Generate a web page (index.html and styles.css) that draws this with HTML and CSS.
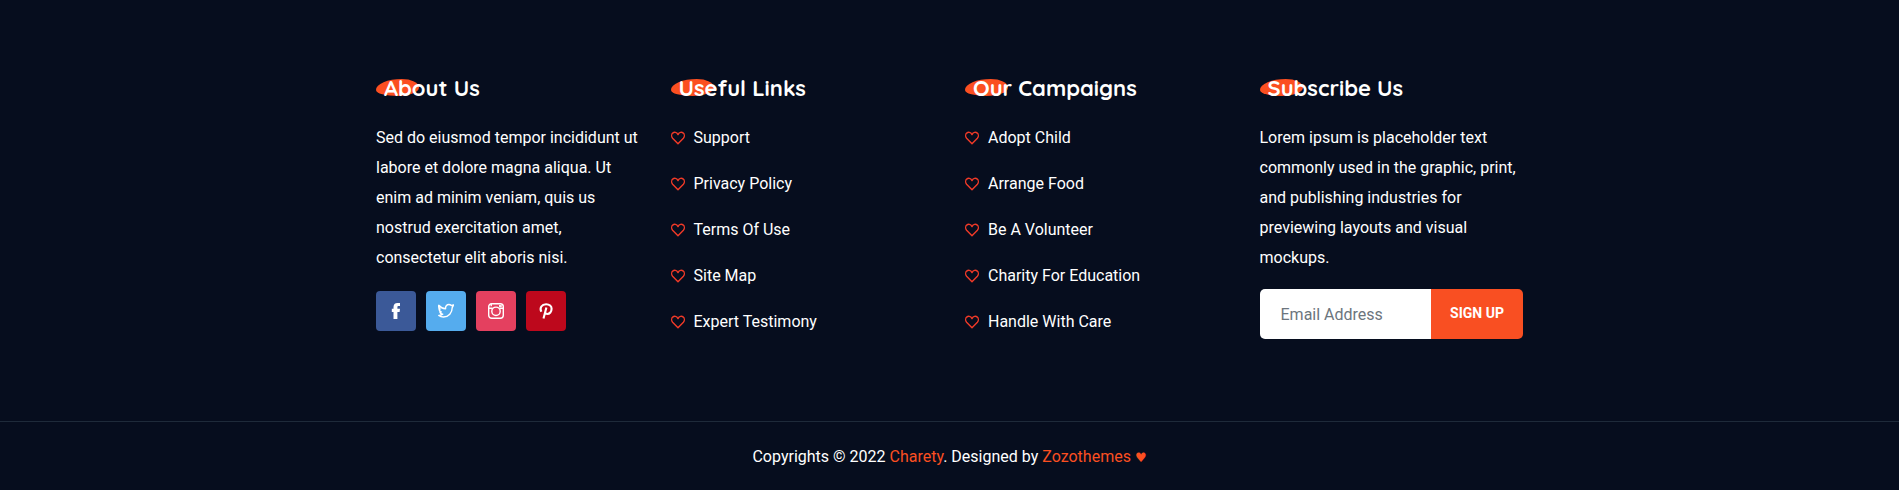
FILE: index.html
```
<!DOCTYPE html>
<html lang="en">
<head>
<meta charset="utf-8">
<meta name="viewport" content="width=device-width, initial-scale=1">
<title>Charety</title>
<link rel="stylesheet" href="styles.css">
</head>
<body>
<svg class="sprite" aria-hidden="true">
  <symbol id="heart" viewBox="0 0 14 14"><path d="M7 12.800 1.600 7.200C.2 5.600.5 3.200 1.700 2.100 3.200.8 5.700.9 7 3.600 8.300.9 10.800.8 12.300 2.100 13.500 3.200 13.800 5.600 12.400 7.200Z" fill="none" stroke="currentColor" stroke-width="1.400" stroke-linejoin="round"/></symbol>
</svg>
<footer class="footer">
  <div class="widgets">
    <section class="widget">
      <h3 class="title">About Us</h3>
      <p class="text">Sed do eiusmod tempor incididunt ut labore et dolore magna aliqua. Ut enim ad minim veniam, quis us nostrud exercitation amet, consectetur elit aboris nisi.</p>
      <div class="social">
        <a class="social-link facebook" href="#" aria-label="Facebook"><svg viewBox="0 0 16 16"><path d="M5.500 16V8.900H3.800V5.800h1.700V4.200C5.500 1.500 6.900 0 9.500 0H12v3.100h-1.400C9.700 3.100 9.400 3.500 9.400 4.300V5.800H12l-.4 3.100H9.400V16Z" fill="currentColor"/></svg></a>
        <a class="social-link twitter" href="#" aria-label="Twitter"><svg viewBox="0 0 16 16"><path d="M.8 2.300C2.600 4.600 5 5.600 7.600 5.800 7.200 3.300 8.800 1.500 10.900 1.500c1 0 1.800.4 2.400 1L15.600 1.900 14.200 4.600C14.300 9.800 10.600 14 5.500 14 3.700 14 2 13.500.8 12.500c1.500 0 2.900-.4 3.900-1.200C3.100 11.100 2.200 10.200 1.900 9h1.300C1.700 8.300.9 7.100.9 5.600l1.200.4C.7 4.800.3 3.500.8 2.300Z" fill="none" stroke="currentColor" stroke-width="1.400" stroke-linejoin="round"/></svg></a>
        <a class="social-link instagram" href="#" aria-label="Instagram"><svg viewBox="0 0 16 16" fill="none" stroke="currentColor" stroke-width="1.400"><rect x=".7" y=".7" width="14.600" height="14.600" rx="3"/><circle cx="8" cy="8.300" r="4.200"/><path d="M.7 5.300h3.800M11.500 5.300h3.800M3.200.8v2.500"/><rect x="11.300" y="2.300" width="2" height="1.600" fill="currentColor" stroke-width=".6"/></svg></a>
        <a class="social-link pinterest" href="#" aria-label="Pinterest"><svg viewBox="0 0 16 16"><path d="M3.400 8.800C1.200 4.700 3.900 1.200 8.100 1.200c3.400 0 5.500 1.900 5.500 4.600 0 3-1.900 5.200-4.400 5.200-1 0-1.700-.4-2-1.100M8.400 4.600 5.500 15.600" fill="none" stroke="currentColor" stroke-width="2.100"/></svg></a>
      </div>
    </section>
    <section class="widget">
      <h3 class="title">Useful Links</h3>
      <ul class="links">
        <li><a href="#"><svg><use href="#heart"/></svg>Support</a></li>
        <li><a href="#"><svg><use href="#heart"/></svg>Privacy Policy</a></li>
        <li><a href="#"><svg><use href="#heart"/></svg>Terms Of Use</a></li>
        <li><a href="#"><svg><use href="#heart"/></svg>Site Map</a></li>
        <li><a href="#"><svg><use href="#heart"/></svg>Expert Testimony</a></li>
      </ul>
    </section>
    <section class="widget">
      <h3 class="title">Our Campaigns</h3>
      <ul class="links">
        <li><a href="#"><svg><use href="#heart"/></svg>Adopt Child</a></li>
        <li><a href="#"><svg><use href="#heart"/></svg>Arrange Food</a></li>
        <li><a href="#"><svg><use href="#heart"/></svg>Be A Volunteer</a></li>
        <li><a href="#"><svg><use href="#heart"/></svg>Charity For Education</a></li>
        <li><a href="#"><svg><use href="#heart"/></svg>Handle With Care</a></li>
      </ul>
    </section>
    <section class="widget">
      <h3 class="title">Subscribe Us</h3>
      <p class="text">Lorem ipsum is placeholder text commonly used in the graphic, print, and publishing industries for previewing layouts and visual mockups.</p>
      <form class="signup">
        <input class="email" type="email" placeholder="Email Address" aria-label="Email Address">
        <button class="submit" type="submit">SIGN UP</button>
      </form>
    </section>
  </div>
  <p class="copyright">Copyrights © 2022 <a href="#">Charety</a>. Designed by <a href="#">Zozothemes <span class="love">♥</span></a></p>
</footer>
</body>
</html>
```
FILE: styles.css
```
* { box-sizing: border-box; }
body {
  margin: 0;
  background: #060d1e;
  color: #fff;
  font: 16px/30px Roboto, "DejaVu Sans", sans-serif;
}
a { color: inherit; text-decoration: none; }
.sprite { position: absolute; width: 0; height: 0; }
.widgets {
  display: grid;
  grid-template-columns: repeat(4, minmax(0, 1fr));
  gap: 31px;
  max-width: 1147px;
  margin: 0 auto;
  padding: 72px 0 82px;
}
.title {
  position: relative;
  z-index: 0;
  margin: 0 0 19px;
  padding-left: 8px;
  font: 700 22px/32px Quicksand, Lato, sans-serif;
}
.title::before {
  content: "";
  position: absolute;
  z-index: -1;
  left: 0;
  top: 7px;
  width: 43px;
  height: 17px;
  border-radius: 60% 40% 50% 50% / 64% 50% 50% 36%;
  background: #fb4f21;
}
.text { margin: 0; }
.social { display: flex; gap: 10px; margin-top: 18px; }
.social-link {
  display: grid;
  place-items: center;
  width: 40px;
  height: 40px;
  border-radius: 4px;
}
.social-link svg { width: 16px; height: 16px; }
.facebook { background: #3b5998; }
.twitter { background: #55acee; }
.instagram { background: #e4405f; }
.pinterest { background: #bd081c; }
.links {
  display: grid;
  gap: 16px;
  margin: 0;
  padding: 0;
  list-style: none;
}
.links a { display: flex; align-items: center; gap: 9px; }
.links svg { width: 14px; height: 14px; color: #f03a28; }
.signup {
  display: flex;
  height: 50px;
  margin-top: 16px;
  border-radius: 5px;
  overflow: hidden;
}
.email {
  flex: 1;
  min-width: 0;
  padding: 2px 21px 0;
  border: 0;
  background: #fff;
  color: #222;
  font: inherit;
}
.email::placeholder { color: #6c757d; opacity: 1; }
.submit {
  width: 92px;
  padding: 0 0 2px;
  border: 0;
  background: #f94f22;
  color: #fff;
  font: 700 14px/24px Roboto, sans-serif;
}
.copyright {
  margin: 0;
  padding: 20px 16px 18px;
  border-top: 1px solid #1e2a3a;
  text-align: center;
}
.copyright a { color: #fb4f21; }
.love { font-size: 13px; }
```
